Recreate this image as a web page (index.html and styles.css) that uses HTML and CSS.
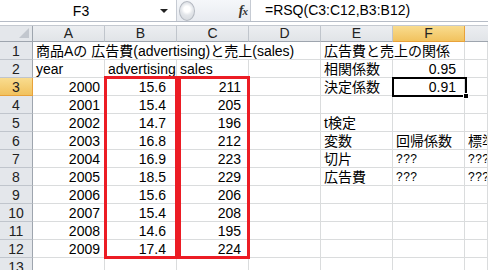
FILE: index.html
```html
<!DOCTYPE html>
<html lang="ja">
<head>
<meta charset="utf-8">
<link rel="stylesheet" href="styles.css">
</head>
<body>
<div class="app">
  <div class="formula-bar">
    <div class="name-box"><span class="name">F3</span><span class="dd"></span></div>
    <div class="fbar-mid"><span class="knob"></span><span class="fx">f<span class="fx-x">x</span></span></div>
    <div class="formula">=RSQ(C3:C12,B3:B12)</div>
  </div>
  <div class="gap"></div>
  <div class="sheet">
    <!-- header -->
    <div class="corner"><span class="tri"></span></div>
    <div class="ch">A</div><div class="ch">B</div><div class="ch">C</div><div class="ch">D</div><div class="ch">E</div><div class="ch sel">F</div><div class="ch last"></div>
    <!-- 1 -->
    <div class="rh">1</div>
    <div class="c t span4">商品Aの 広告費(advertising)と売上(sales)</div>
    <div class="c t span2">広告費と売上の関係</div>
    <div class="c"></div>
    <!-- 2 -->
    <div class="rh">2</div>
    <div class="c t">year</div><div class="c t">advertising</div><div class="c t">sales</div><div class="c"></div>
    <div class="c t">相関係数</div><div class="c n nf">0.95</div><div class="c"></div>
    <!-- 3 -->
    <div class="rh sel">3</div>
    <div class="c n na">2000</div><div class="c n nb">15.6</div><div class="c n nc">211</div><div class="c"></div>
    <div class="c t">決定係数</div><div class="c n nf">0.91</div><div class="c"></div>
    <!-- 4 -->
    <div class="rh">4</div>
    <div class="c n na">2001</div><div class="c n nb">15.4</div><div class="c n nc">205</div><div class="c"></div>
    <div class="c"></div><div class="c"></div><div class="c"></div>
    <!-- 5 -->
    <div class="rh">5</div>
    <div class="c n na">2002</div><div class="c n nb">14.7</div><div class="c n nc">196</div><div class="c"></div>
    <div class="c t">t検定</div><div class="c"></div><div class="c"></div>
    <!-- 6 -->
    <div class="rh">6</div>
    <div class="c n na">2003</div><div class="c n nb">16.8</div><div class="c n nc">212</div><div class="c"></div>
    <div class="c t">変数</div><div class="c t">回帰係数</div><div class="c t">標準誤差</div>
    <!-- 7 -->
    <div class="rh">7</div>
    <div class="c n na">2004</div><div class="c n nb">16.9</div><div class="c n nc">223</div><div class="c"></div>
    <div class="c t">切片</div><div class="c t q">???</div><div class="c t q">???</div>
    <!-- 8 -->
    <div class="rh">8</div>
    <div class="c n na">2005</div><div class="c n nb">18.5</div><div class="c n nc">229</div><div class="c"></div>
    <div class="c t">広告費</div><div class="c t q">???</div><div class="c t q">???</div>
    <!-- 9 -->
    <div class="rh">9</div>
    <div class="c n na">2006</div><div class="c n nb">15.6</div><div class="c n nc">206</div><div class="c"></div>
    <div class="c"></div><div class="c"></div><div class="c"></div>
    <!-- 10 -->
    <div class="rh">10</div>
    <div class="c n na">2007</div><div class="c n nb">15.4</div><div class="c n nc">208</div><div class="c"></div>
    <div class="c"></div><div class="c"></div><div class="c"></div>
    <!-- 11 -->
    <div class="rh">11</div>
    <div class="c n na">2008</div><div class="c n nb">14.6</div><div class="c n nc">195</div><div class="c"></div>
    <div class="c"></div><div class="c"></div><div class="c"></div>
    <!-- 12 -->
    <div class="rh">12</div>
    <div class="c n na">2009</div><div class="c n nb">17.4</div><div class="c n nc">224</div><div class="c"></div>
    <div class="c"></div><div class="c"></div><div class="c"></div>
    <!-- 13 -->
    <div class="rh">13</div>
    <div class="c"></div><div class="c"></div><div class="c"></div><div class="c"></div>
    <div class="c"></div><div class="c"></div><div class="c"></div>

    <!-- overlays -->
    <div class="box box-b"></div>
    <div class="box box-c"></div>
    <div class="selection"><span class="handle"></span></div>
  </div>
</div>
</body>
</html>
```

FILE: styles.css
```css
* { box-sizing: border-box; }
html, body { margin: 0; padding: 0; background: #ffffff; }
body {
  width: 488px;
  height: 270px;
  overflow: hidden;
  font-family: "Liberation Sans", "Noto Sans CJK JP", sans-serif;
  font-size: 14px;
  color: #000;
}
.app { display: flex; flex-direction: column; width: 488px; height: 270px; }

/* formula bar */
.formula-bar {
  display: flex;
  height: 22px;
  background: #eef1f5;
  border-bottom: 1px solid #b6bcc6;
}
.name-box {
  width: 177px;
  display: flex;
  align-items: center;
  background: #fff;
  border-right: 1px solid #c6cbd3;
}
.name { flex: 1; text-align: center; padding-left: 2px; font-size: 14px; }
.dd {
  width: 0; height: 0;
  border-left: 4px solid transparent;
  border-right: 4px solid transparent;
  border-top: 4px solid #222;
  margin-right: 8px;
}
.fbar-mid {
  width: 73px;
  display: flex;
  align-items: center;
  justify-content: space-between;
  padding: 0 3px 0 2px;
  background: linear-gradient(#f5f7fa, #e8ebf0);
}
.knob {
  width: 16px; height: 20px;
  border-radius: 50%;
  border: 1px solid #b4b9c1;
  background: radial-gradient(circle at 50% 40%, #ffffff 0 3px, #e3e6ea 6px, #d3d7dc 100%);
}
.fx {
  font-family: "Liberation Serif", serif;
  font-style: italic;
  font-weight: bold;
  font-size: 14px;
  color: #333;
  letter-spacing: -1px;
}
.fx-x { font-size: 11px; }
.formula {
  flex: 1;
  background: #fff;
  border-left: 1px solid #c6cbd3;
  padding-left: 14px;
  line-height: 21px;
  font-size: 14px;
}
.gap {
  height: 4px;
  background: #fff;
  border-bottom: 1px solid #c4c9d0;
}

/* sheet */
.sheet {
  position: relative;
  flex: 1;
  display: grid;
  grid-template-columns: 33px repeat(6, 72px) 1fr;
  grid-template-rows: 16px repeat(12, 18px) 1fr;
  overflow: hidden;
}
.corner {
  position: relative;
  background: #e4e7eb;
  border-right: 1px solid #9ea5ae;
  border-bottom: 1px solid #9ea5ae;
}
.tri {
  position: absolute;
  right: 3px; bottom: 3px;
  width: 0; height: 0;
  border-left: 10px solid transparent;
  border-bottom: 10px solid #c2c7ce;
}
.ch {
  background: linear-gradient(#eceef1, #e1e4e8);
  border-right: 1px solid #c0c5cc;
  border-bottom: 1px solid #9ea5ae;
  text-align: center;
  line-height: 15px;
  font-size: 14px;
  color: #222;
}
.ch.last { border-right: none; }
.rh {
  background: #e4e7eb;
  border-right: 1px solid #9ea5ae;
  border-bottom: 1px solid #c0c5cc;
  text-align: center;
  line-height: 18px;
  font-size: 14px;
  color: #222;
}
.ch.sel, .rh.sel {
  background: linear-gradient(#f9dc8f, #f1c25e);
  border-color: #e8a23a;
}
.c {
  border-right: 1px solid #dadcdd;
  border-bottom: 1px solid #dadcdd;
  line-height: 18px;
  white-space: nowrap;
  overflow: hidden;
}
.c.span4 { grid-column: span 4; overflow: visible; }
.c.span2 { grid-column: span 2; overflow: visible; }
.t { padding-left: 3px; text-align: left; }
.n { text-align: right; }
.na { padding-right: 4px; }
.nb { padding-right: 10px; }
.nc { padding-right: 7px; }
.nf { padding-right: 8px; }
.q { font-size: 12px; letter-spacing: 0.5px; }

/* overlays */
.box {
  position: absolute;
  top: 50px;
  height: 183px;
  border: 3px solid #ec1c24;
}
.box-b { left: 104px; width: 74px; }
.box-c { left: 178px; width: 72px; }
.selection {
  position: absolute;
  left: 392px;
  top: 51px;
  width: 75px;
  height: 20px;
  border: 2px solid #000;
}
.handle {
  position: absolute;
  right: -4px;
  bottom: -4px;
  width: 6px;
  height: 6px;
  background: #000;
  border: 1px solid #fff;
}
```
